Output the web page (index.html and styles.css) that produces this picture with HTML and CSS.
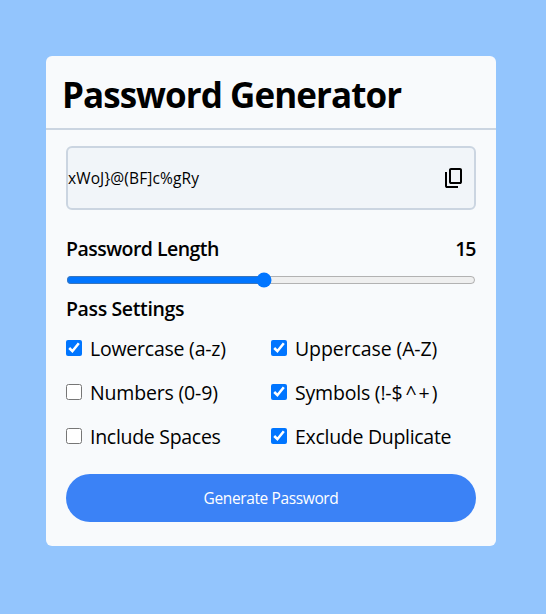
FILE: index.html
```html
<!DOCTYPE html>
<html lang="en">
<head>
<meta charset="utf-8">
<title>Password Generator</title>
<link rel="stylesheet" href="styles.css">
</head>
<body>
<main class="card">
  <h1 class="title">Password Generator</h1>
  <div class="content">
    <div class="password">
      <input class="password-text" type="text" value="xWoJ}@(BF]c%gRy" readonly aria-label="Password">
      <button class="copy" aria-label="Copy"><svg viewBox="0 0 24 24" width="24" height="24"><path fill="currentColor" d="M9 18q-.825 0-1.413-.588T7 16V4q0-.825.588-1.413T9 2h9q.825 0 1.413.588T20 4v12q0 .825-.588 1.413T18 18H9Zm0-2h9V4H9v12Zm-4 6q-.825 0-1.413-.588T3 20V6h2v14h11v2H5Z"/></svg></button>
    </div>
    <div class="length"><span class="length-label">Password Length</span><span class="length-value">15</span></div>
    <input class="slider" type="range" min="1" max="30" value="15" aria-label="Password Length">
    <h2 class="settings-title">Pass Settings</h2>
    <div class="options">
      <label><input type="checkbox" checked><span class="lowercase">Lowercase (a-z)</span></label>
      <label><input type="checkbox" checked><span class="uppercase">Uppercase (A-Z)</span></label>
      <label><input type="checkbox"><span class="numbers">Numbers (0-9)</span></label>
      <label><input type="checkbox" checked><span class="symbols">Symbols (!-$<span class="wide">^+</span>)</span></label>
      <label><input type="checkbox"><span class="spaces">Include Spaces</span></label>
      <label><input type="checkbox" checked><span class="duplicate">Exclude Duplicate</span></label>
    </div>
    <button class="generate">Generate Password</button>
  </div>
</main>
</body>
</html>
```
FILE: styles.css
```css
* { box-sizing: border-box; }
body {
  margin: 0;
  min-height: 614px;
  padding: 56px 46px;
  background: #93c5fd;
  color: #000;
  font-family: "Segoe UI", "Open Sans", "Noto Sans", sans-serif;
}
.card {
  width: 450px;
  height: 490px;
  background: #f8fafc;
  border-radius: 6px;
}
.title {
  margin: 0;
  height: 74px;
  padding: 0 16px;
  border-bottom: 2px solid #cbd5e1;
  font-size: 35px;
  font-weight: 700;
  line-height: 77px;
  letter-spacing: -0.95px;
  white-space: nowrap;
}
.content { padding: 16px 20px 0; }
.password {
  display: flex;
  align-items: center;
  height: 64px;
  padding-right: 8px;
  background: #f1f5f9;
  border: 2px solid #cbd5e1;
  border-radius: 6px;
}
.password-text {
  flex: 1;
  min-width: 0;
  padding: 0;
  border: 0;
  background: transparent;
  color: #000;
  font: 15.5px "Open Sans", sans-serif;
  letter-spacing: 0.12px;
}
.copy { display: flex; padding: 0; border: 0; background: none; color: #000; }
.length {
  display: flex;
  justify-content: space-between;
  margin-top: 25px;
  font-size: 19.5px;
  line-height: 28px;
  font-weight: 600;
}
.length-label { letter-spacing: -0.53px; }
.length-value { margin-right: 1px; letter-spacing: -1.3px; }
.slider { display: block; width: 100%; height: 16px; margin: 9px 0 7px; accent-color: #0075ff; }
.settings-title { margin: 0; font-size: 19.5px; line-height: 28px; font-weight: 600; letter-spacing: -0.37px; }
.options { display: grid; grid-template-columns: 1fr 1fr; gap: 16px 0; margin-top: 11px; }
.options label { display: flex; align-items: center; gap: 8px; height: 28px; font-size: 19.5px; white-space: nowrap; }
.options input { width: 16px; height: 16px; margin: 0; flex: none; }
.lowercase { letter-spacing: -0.23px; }
.uppercase { letter-spacing: -0.1px; }
.numbers { letter-spacing: -0.17px; }
.symbols { letter-spacing: -0.2px; }
.wide { margin-left: 3px; letter-spacing: 2px; }
.spaces { letter-spacing: -0.29px; }
.duplicate { letter-spacing: -0.29px; }
.generate {
  width: 100%;
  height: 48px;
  margin-top: 24px;
  border: 0;
  border-radius: 24px;
  background: #3b82f6;
  color: #fff;
  font: 15.5px "Open Sans", sans-serif;
  letter-spacing: -0.38px;
}
```
